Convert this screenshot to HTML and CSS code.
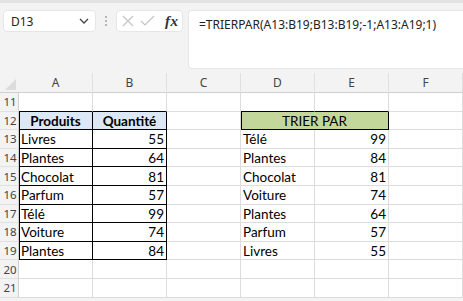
FILE: index.html
```html
<!DOCTYPE html>
<html lang="fr">
<head>
<meta charset="utf-8">
<link rel="stylesheet" href="styles.css">
</head>
<body>
<div class="app">
  <div class="topbar"></div>
  <div class="fbar">
    <div class="namebox">
      <span class="ref">D13</span>
      <svg class="chev" width="10" height="6" viewBox="0 0 10 6"><path d="M1 1 L5 5 L9 1" fill="none" stroke="#444" stroke-width="1.3"/></svg>
    </div>
    <div class="sep">
      <svg width="4" height="12" viewBox="0 0 4 12"><circle cx="2" cy="2" r="0.9" fill="#999"/><circle cx="2" cy="6" r="0.9" fill="#999"/><circle cx="2" cy="10" r="0.9" fill="#999"/></svg>
    </div>
    <div class="fxbox">
      <svg width="12" height="12" viewBox="0 0 12 12"><path d="M1 1 L11 11 M11 1 L1 11" stroke="#c4c4c4" stroke-width="1.2" fill="none"/></svg>
      <svg width="15" height="12" viewBox="0 0 15 12"><path d="M1 6 L5 10 L14 1" stroke="#c4c4c4" stroke-width="1.2" fill="none"/></svg>
      <span class="fx">fx</span>
    </div>
    <div class="formula">=TRIERPAR(A13:B19;B13:B19;-1;A13:A19;1)</div>
  </div>
  <div class="sheet">
    <div class="corner"><span class="tri"></span></div>
    <div class="ch">A</div><div class="ch">B</div><div class="ch">C</div><div class="ch">D</div><div class="ch">E</div><div class="ch">F</div>

    <div class="rh">11</div><div class="c tb"></div><div class="c tb"></div><div class="c"></div><div class="c tb"></div><div class="c tb"></div><div class="c"></div>

    <div class="rh">12</div><div class="c t tl hd">Produits</div><div class="c t hd">Quantité</div><div class="c"></div><div class="c merged">TRIER PAR</div><div class="c"></div>

    <div class="rh">13</div><div class="c t tl">Livres</div><div class="c t n">55</div><div class="c"></div><div class="c">Télé</div><div class="c n">99</div><div class="c"></div>
    <div class="rh">14</div><div class="c t tl">Plantes</div><div class="c t n">64</div><div class="c"></div><div class="c">Plantes</div><div class="c n">84</div><div class="c"></div>
    <div class="rh">15</div><div class="c t tl">Chocolat</div><div class="c t n">81</div><div class="c"></div><div class="c">Chocolat</div><div class="c n">81</div><div class="c"></div>
    <div class="rh">16</div><div class="c t tl">Parfum</div><div class="c t n">57</div><div class="c"></div><div class="c">Voiture</div><div class="c n">74</div><div class="c"></div>
    <div class="rh">17</div><div class="c t tl">Télé</div><div class="c t n">99</div><div class="c"></div><div class="c">Plantes</div><div class="c n">64</div><div class="c"></div>
    <div class="rh">18</div><div class="c t tl">Voiture</div><div class="c t n">74</div><div class="c"></div><div class="c">Parfum</div><div class="c n">57</div><div class="c"></div>
    <div class="rh">19</div><div class="c t tl">Plantes</div><div class="c t n">84</div><div class="c"></div><div class="c">Livres</div><div class="c n">55</div><div class="c"></div>
    <div class="rh">20</div><div class="c"></div><div class="c"></div><div class="c"></div><div class="c"></div><div class="c"></div><div class="c"></div>
    <div class="rh">21</div><div class="c"></div><div class="c"></div><div class="c"></div><div class="c"></div><div class="c"></div><div class="c"></div>
  </div>
</div>
</body>
</html>
```

FILE: styles.css
```css
* { box-sizing: border-box; }
html, body { margin: 0; padding: 0; }
body { width: 463px; height: 301px; overflow: hidden; background: #ffffff; }
.app { width: 463px; height: 301px; overflow: hidden; background: #f3f3f3; }
.topbar { height: 3px; background: #e2e2e2; }
.fbar {
  display: flex;
  align-items: flex-start;
  padding: 7px 0 0 3px;
  height: 70px;
}
.namebox {
  width: 93px; height: 22px;
  background: #fff;
  border: 1px solid #e6e6e6;
  border-radius: 4px;
  display: flex; align-items: center; justify-content: space-between;
  padding: 0 6px 0 7px;
  font-family: "Noto Sans", "Open Sans", sans-serif;
  font-size: 12px; color: #222;
}
.sep { width: 20px; height: 22px; display: flex; align-items: center; justify-content: center; }
.fxbox {
  width: 67px; height: 22px;
  background: #fff;
  border: 1px solid #e6e6e6;
  border-radius: 4px;
  display: flex; align-items: center; gap: 6px;
  padding: 0 0 0 5px;
}
.fx {
  font-family: "Liberation Serif", serif;
  font-style: italic;
  font-weight: bold;
  font-size: 15px;
  color: #333;
  margin-left: 4px;
  letter-spacing: 0.5px;
}
.formula {
  margin-left: 5px;
  flex: 1;
  height: 59px;
  background: #fff;
  border: 1px solid #e6e6e6;
  border-right: none;
  border-radius: 4px 0 0 4px;
  padding: 5px 0 0 10px;
  font-family: "Noto Sans", "Open Sans", sans-serif;
  font-size: 12px;
  color: #222;
  white-space: nowrap;
}
.sheet {
  display: grid;
  grid-template-columns: 19px repeat(6, 74px);
  grid-template-rows: 20px repeat(11, 18.6px);
  font-family: "Lato", "Liberation Sans", sans-serif;
  font-size: 13.5px;
  color: #000;
}
.corner { position: relative; border-bottom: 1px solid #cfcfcf; }
.tri {
  position: absolute; right: 3px; bottom: 2px;
  width: 0; height: 0;
  border-left: 11px solid transparent;
  border-bottom: 11px solid #dcdcdc;
}
.ch {
  display: flex; align-items: center; justify-content: center;
  border-bottom: 1px solid #cfcfcf;
  border-right: 1px solid #e0e0e0;
  font-family: "Noto Sans", "Open Sans", sans-serif;
  font-size: 12px; color: #444;
}
.rh {
  display: flex; align-items: center; justify-content: center;
  border-right: 1px solid #cfcfcf;
  border-bottom: 1px solid #e0e0e0;
  font-family: "Noto Sans", "Open Sans", sans-serif;
  font-size: 11.5px; color: #444;
  padding-left: 2px;
}
.c {
  background: #fff;
  border-right: 1px solid #dcdcdc;
  border-bottom: 1px solid #dcdcdc;
  display: flex; align-items: center;
  padding: 1px 2px 0 2px;
  white-space: nowrap;
}
.c.tb { border-bottom-color: #000; }
.c.t { border-right-color: #000; border-bottom-color: #000; }
.c.tl { box-shadow: inset 1px 0 0 #000; }
.c.hd { background: #dce8f6; font-weight: bold; justify-content: center; }
.c.n { justify-content: flex-end; }
.c.merged {
  grid-column: span 2;
  background: #c3d79b;
  border-right-color: #000;
  border-bottom-color: #000;
  box-shadow: inset 1px 0 0 #000;
  justify-content: center;
}
```
